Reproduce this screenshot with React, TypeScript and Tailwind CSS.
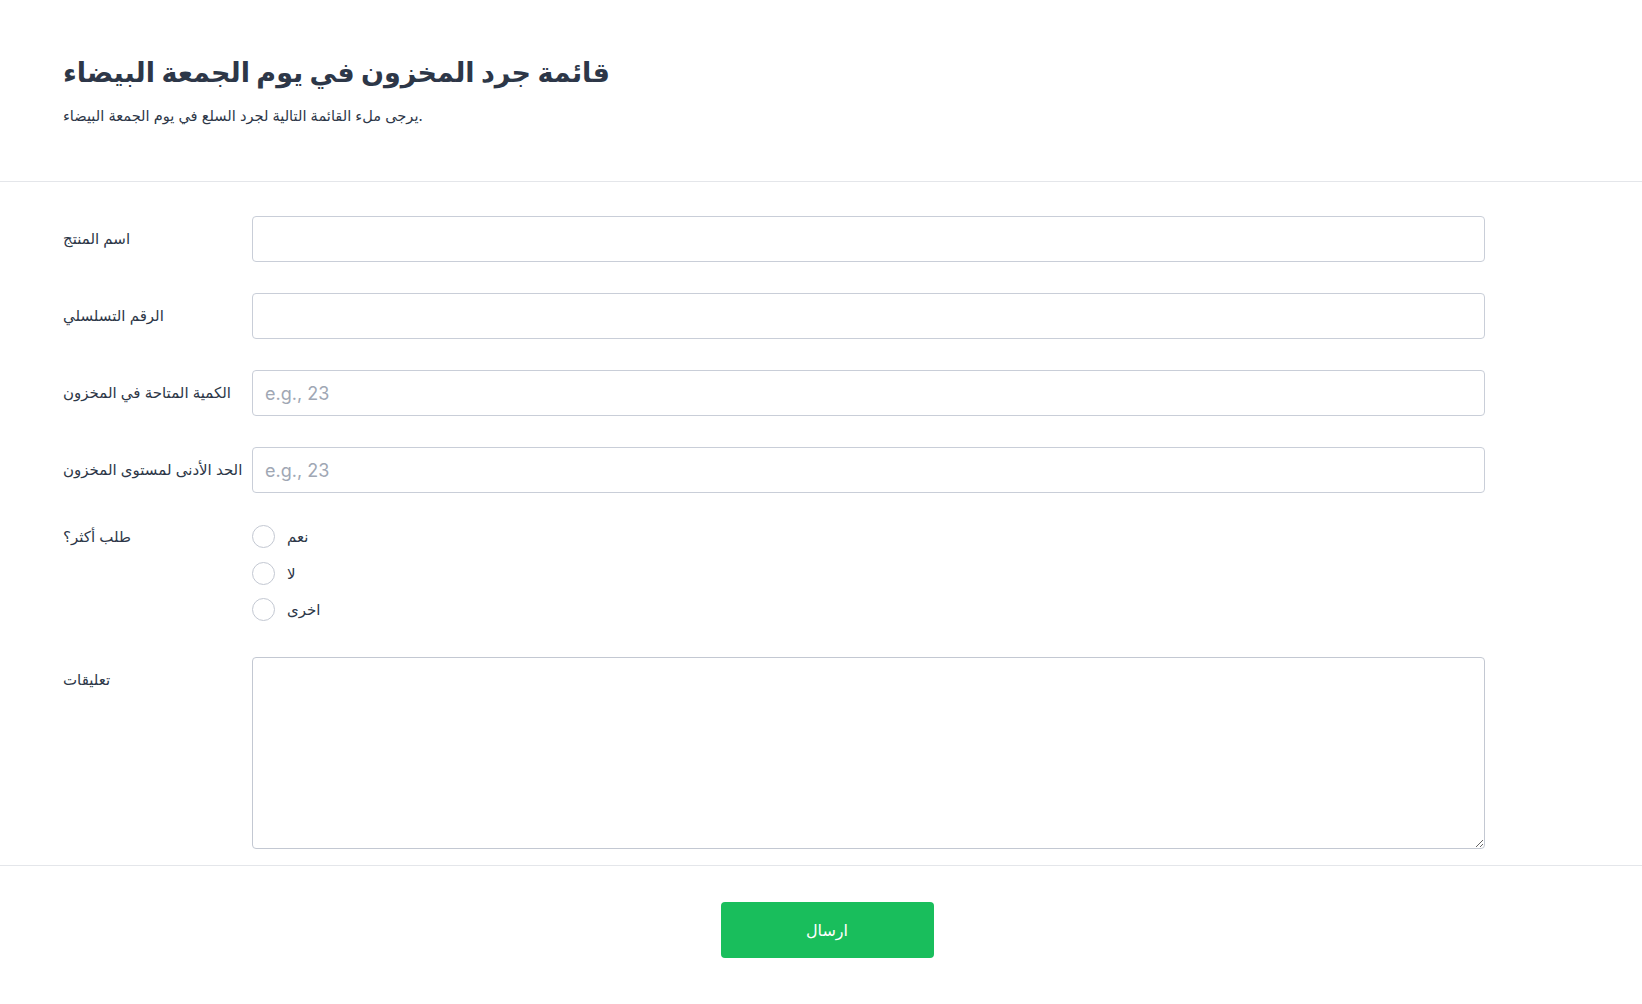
import { useState } from "react";

const fieldClass =
  "w-[1233px] h-[46px] border border-[#c9ced8] rounded-[4px] px-3 text-[18px] text-[#2d3748] placeholder:text-[#a0a7b4] outline-none";

const TextRow = ({ label, placeholder }: { label: string; placeholder?: string }) => (
  <div className="flex">
    <label className="w-[189px] shrink-0 leading-[46px] text-[15px] text-[#2d3748]">{label}</label>
    <input type="text" className={fieldClass} placeholder={placeholder} />
  </div>
);

export default function App() {
  const [choice, setChoice] = useState("");

  return (
    <div className="min-h-screen bg-white font-['Inter','DejaVu_Sans',sans-serif] text-[#2d3748]">
      <div className="px-[63px] pt-[54px] pb-[54px] border-b border-[#e4e6ea]">
        <h1 className="text-[27px] leading-[38px] font-bold text-[#2d3748]">
          قائمة جرد المخزون في يوم الجمعة البيضاء
        </h1>
        <p className="mt-[13px] text-[14.6px] leading-[22px] text-[#2d3748]">
          يرجى ملء القائمة التالية لجرد السلع في يوم الجمعة البيضاء.
        </p>
      </div>

      <div className="px-[63px] pt-[34px] pb-[16px] border-b border-[#e4e6ea] flex flex-col">
        <div className="flex flex-col gap-[31px]">
          <TextRow label="اسم المنتج" />
          <TextRow label="الرقم التسلسلي" />
          <TextRow label="الكمية المتاحة في المخزون" placeholder="e.g., 23" />
          <TextRow label="الحد الأدنى لمستوى المخزون" placeholder="e.g., 23" />

          <div className="flex mt-[1px]">
            <span className="w-[189px] shrink-0 leading-[23px] text-[15px]">طلب أكثر؟</span>
            <div className="flex flex-col gap-[13.5px]">
              {["نعم", "لا", "اخرى"].map((opt) => (
                <label key={opt} className="flex items-center gap-[12px] cursor-pointer">
                  <span
                    onClick={() => setChoice(opt)}
                    className="w-[23px] h-[23px] rounded-full border border-[#c3c8d2] bg-white flex items-center justify-center"
                  >
                    {choice === opt && <span className="w-[11px] h-[11px] rounded-full bg-[#19be5c]" />}
                  </span>
                  <span className="text-[15px] leading-[23px]">{opt}</span>
                </label>
              ))}
            </div>
          </div>
        </div>

        <div className="flex mt-[36px]">
          <label className="w-[189px] shrink-0 leading-[46px] text-[15px]">تعليقات</label>
          <textarea className="w-[1233px] h-[192px] border border-[#c3c8d2] rounded-[4px] px-3 py-2 text-[16px] outline-none" />
        </div>
      </div>

      <div className="flex justify-center pl-[12px] pt-[36px] pb-[48px]">
        <button className="w-[213px] h-[56px] rounded-[4px] bg-[#19be5c] text-white text-[16px]">
          ارسال
        </button>
      </div>
    </div>
  );
}
